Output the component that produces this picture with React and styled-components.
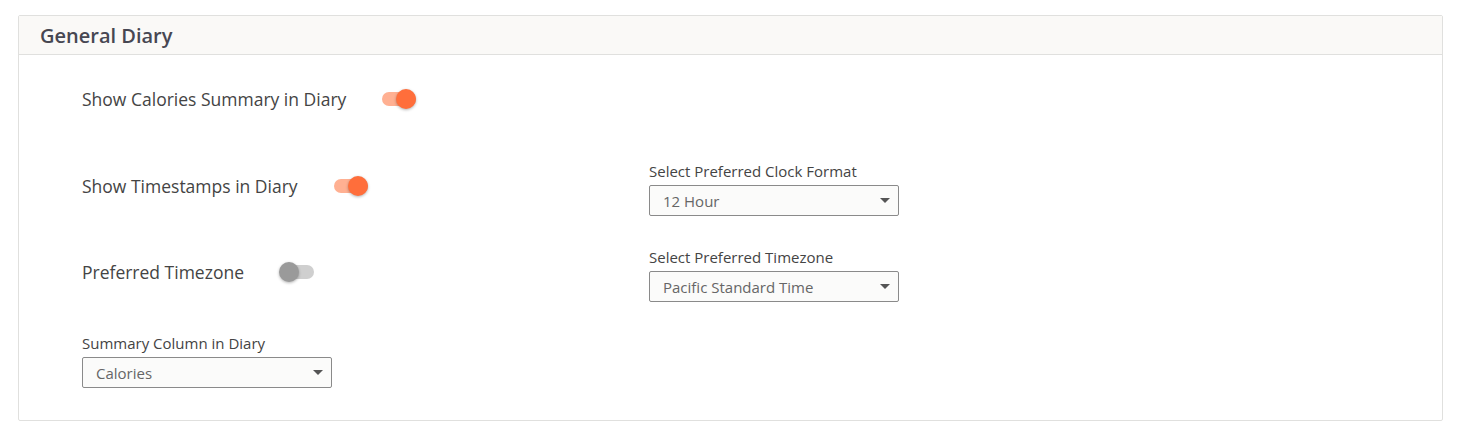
import styled, { createGlobalStyle } from "styled-components"

const GlobalStyle = createGlobalStyle`
  body {
    margin: 0;
    background: #ffffff;
    font-family: "Open Sans", "Liberation Sans", sans-serif;
    color: #444;
  }
`

const Page = styled.div`
  padding: 15px 16px 0 18px;
`

const Card = styled.section`
  border: 1px solid #e0e0de;
  border-radius: 2px;
  background: #fff;
`

const Header = styled.div`
  height: 38px;
  display: flex;
  align-items: center;
  padding: 0 21px;
  background: #faf9f7;
  border-bottom: 1px solid #e0e0de;
`

const Title = styled.h2`
  margin: 0;
  font-size: 20px;
  font-weight: 600;
  color: #474752;
`

const Body = styled.div`
  display: grid;
  grid-template-columns: 567px 1fr;
  grid-template-rows: 87px 86px 86px 1fr;
  padding: 19px 0 0 63px;
  height: 365px;
  box-sizing: border-box;
`

const Cell = styled.div`
  display: flex;
  flex-direction: column;
  align-items: flex-start;
`

const ToggleRow = styled.label`
  display: flex;
  align-items: center;
  height: 30px;
  margin-top: 10px;
  font-size: 17.5px;
  color: #444;
`

const Track = styled.span`
  position: relative;
  display: inline-block;
  width: 34px;
  height: 14px;
  margin-left: 36px;
  border-radius: 7px;
  background: ${p => (p.$on ? "#ffb092" : "#cfcfcf")};
`

const Thumb = styled.span`
  position: absolute;
  top: -3px;
  left: ${p => (p.$on ? "14px" : "-1px")};
  width: 20px;
  height: 20px;
  border-radius: 50%;
  background: ${p => (p.$on ? "#ff6e3b" : "#9a9a9a")};
  box-shadow: 0 1px 3px rgba(0, 0, 0, 0.3);
`

const FieldLabel = styled.div`
  font-size: 15px;
  line-height: 21px;
  color: #444;
`

const Select = styled.div`
  margin-top: 3px;
  width: 250px;
  height: 31px;
  box-sizing: border-box;
  display: flex;
  align-items: center;
  justify-content: space-between;
  padding: 0 8px 0 13px;
  border: 1px solid #8a8a8a;
  border-radius: 2px;
  background: #fbfbfa;
  font-size: 15px;
  color: #666;
`

const Caret = styled.span`
  width: 0;
  height: 0;
  border-left: 5px solid transparent;
  border-right: 5px solid transparent;
  border-top: 5px solid #555;
`

function Toggle({ label, on }) {
  return (
    <ToggleRow>
      {label}
      <Track $on={on}>
        <Thumb $on={on} />
      </Track>
    </ToggleRow>
  )
}

function Field({ label, value }) {
  return (
    <Cell>
      <FieldLabel>{label}</FieldLabel>
      <Select>
        {value}
        <Caret />
      </Select>
    </Cell>
  )
}

export default function App() {
  return (
    <Page>
      <GlobalStyle />
      <Card>
        <Header>
          <Title>General Diary</Title>
        </Header>
        <Body>
          <Cell>
            <Toggle label="Show Calories Summary in Diary" on />
          </Cell>
          <Cell />
          <Cell>
            <Toggle label="Show Timestamps in Diary" on />
          </Cell>
          <Field label="Select Preferred Clock Format" value="12 Hour" />
          <Cell>
            <Toggle label="Preferred Timezone" on={false} />
          </Cell>
          <Field label="Select Preferred Timezone" value="Pacific Standard Time" />
          <Field label="Summary Column in Diary" value="Calories" />
          <Cell />
        </Body>
      </Card>
    </Page>
  )
}
